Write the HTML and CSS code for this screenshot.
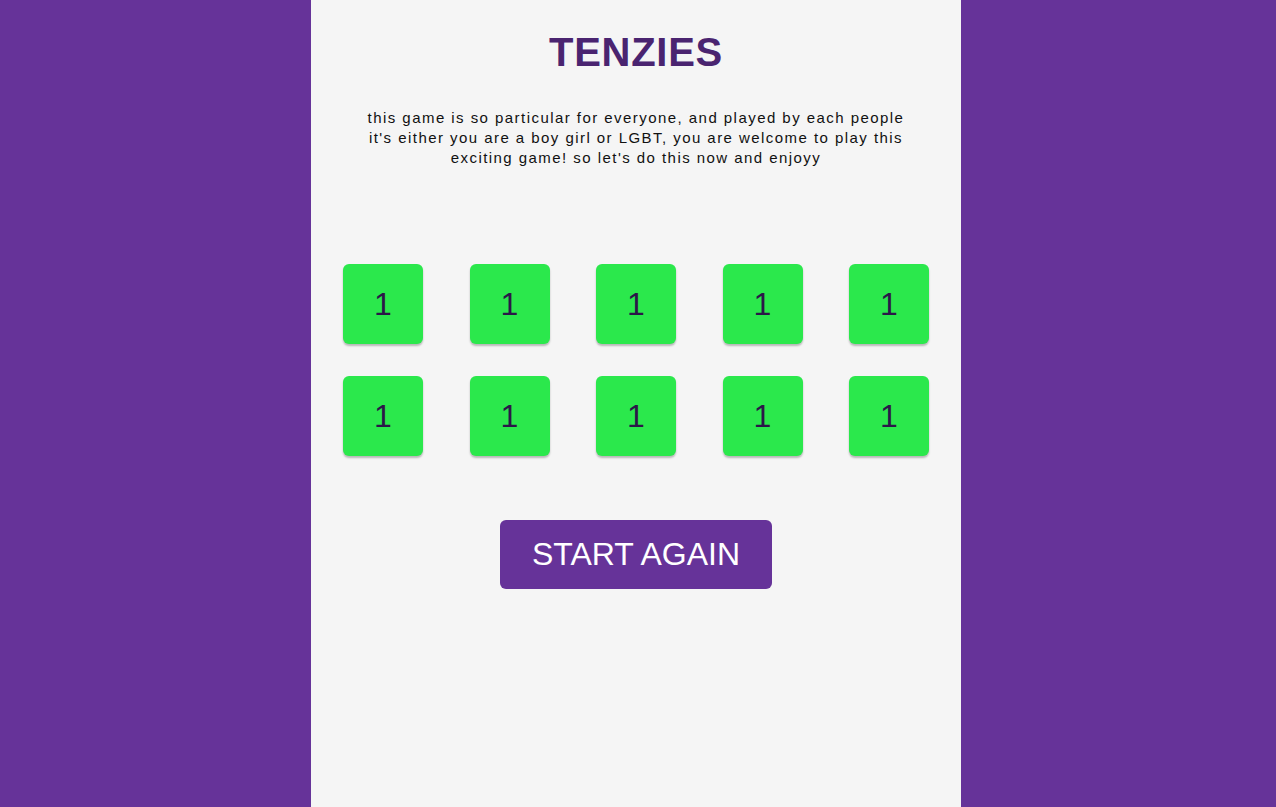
FILE: index.html
```html
<!DOCTYPE html>
<html>
<head>
<meta charset="utf-8">
<link rel="stylesheet" href="styles.css">
</head>
<body>
<main class="panel">
  <h1 class="title">TENZIES</h1>
  <p class="desc">this game is so particular for everyone, and played by each people<br>it's either you are a boy girl or LGBT, you are welcome to play this<br>exciting game! so let's do this now and enjoyy</p>
  <div class="dice">
    <div class="die">1</div>
    <div class="die">1</div>
    <div class="die">1</div>
    <div class="die">1</div>
    <div class="die">1</div>
    <div class="die">1</div>
    <div class="die">1</div>
    <div class="die">1</div>
    <div class="die">1</div>
    <div class="die">1</div>
  </div>
  <button class="btn">START AGAIN</button>
</main>
</body>
</html>
```
FILE: styles.css
```css
html, body {
  margin: 0;
  height: 100%;
}
body {
  background: #663399;
  font-family: "Liberation Sans", Arial, sans-serif;
  display: flex;
  justify-content: center;
  padding-right: 4px;
  box-sizing: border-box;
}
.panel {
  width: 650px;
  box-sizing: border-box;
  background: #f5f5f5;
  min-height: 100%;
  padding: 29px 32px 0;
  display: flex;
  flex-direction: column;
  align-items: center;
}
.title {
  margin: 0;
  font-size: 40px;
  font-weight: bold;
  letter-spacing: 0.7px;
  color: #4a2470;
  line-height: 46px;
}
.desc {
  margin: 33px 0 0;
  font-size: 15px;
  line-height: 20px;
  letter-spacing: 1.45px;
  text-align: center;
  color: #111;
}
.dice {
  margin-top: 96px;
  align-self: stretch;
  display: grid;
  grid-template-columns: repeat(5, 80px);
  justify-content: space-between;
  row-gap: 32px;
}
.die {
  width: 80px;
  height: 80px;
  background: #2be84c;
  border-radius: 6px;
  box-shadow: 0 2px 2px rgba(0, 0, 0, 0.25);
  display: flex;
  align-items: center;
  justify-content: center;
  font-size: 32px;
  color: #2b1748;
}
.btn {
  margin-top: 64px;
  width: 272px;
  height: 69px;
  background: #663399;
  color: #fff;
  border: none;
  border-radius: 6px;
  font-family: "Liberation Sans", Arial, sans-serif;
  font-size: 32px;
  padding: 0;
}
```
